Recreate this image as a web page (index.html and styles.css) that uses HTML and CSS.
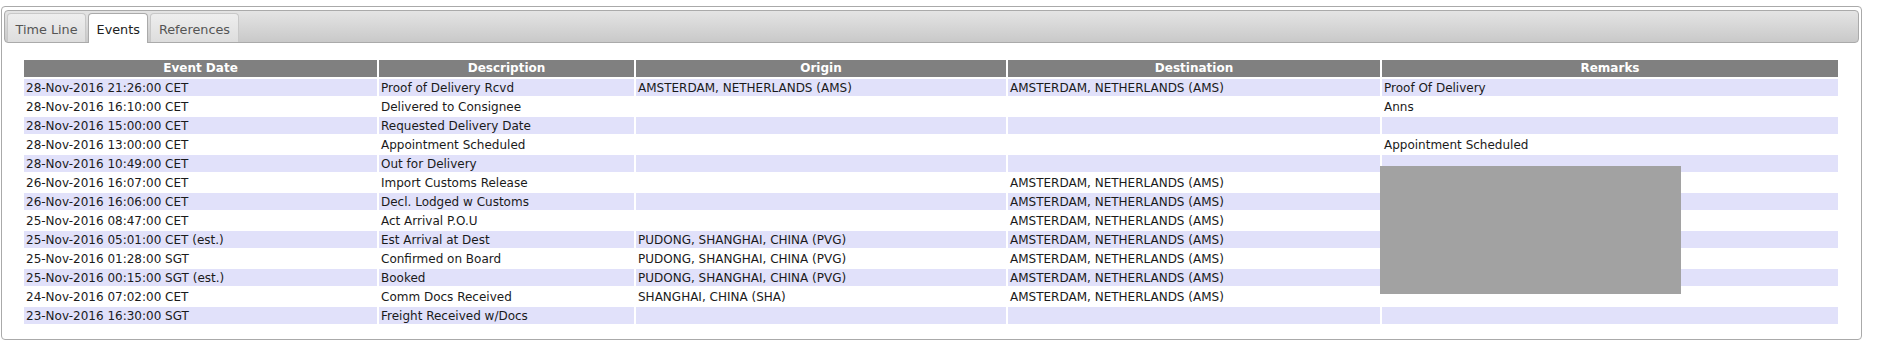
FILE: index.html
```html
<!DOCTYPE html>
<html>
<head>
<meta charset="utf-8">
<link rel="stylesheet" href="styles.css">
</head>
<body>
<div class="tabs">
  <ul class="tab-nav">
    <li class="tab"><a>Time Line</a></li>
    <li class="tab active"><a>Events</a></li>
    <li class="tab"><a>References</a></li>
  </ul>
  <div class="panel">
    <table class="events">
      <colgroup>
        <col class="c-date"><col class="c-desc"><col class="c-origin"><col class="c-dest"><col class="c-rem">
      </colgroup>
      <thead>
        <tr><th>Event Date</th><th>Description</th><th>Origin</th><th>Destination</th><th>Remarks</th></tr>
      </thead>
      <tbody>
        <tr><td>28-Nov-2016 21:26:00 CET</td><td>Proof of Delivery Rcvd</td><td>AMSTERDAM, NETHERLANDS (AMS)</td><td>AMSTERDAM, NETHERLANDS (AMS)</td><td>Proof Of Delivery</td></tr>
        <tr><td>28-Nov-2016 16:10:00 CET</td><td>Delivered to Consignee</td><td></td><td></td><td>Anns</td></tr>
        <tr><td>28-Nov-2016 15:00:00 CET</td><td>Requested Delivery Date</td><td></td><td></td><td></td></tr>
        <tr><td>28-Nov-2016 13:00:00 CET</td><td>Appointment Scheduled</td><td></td><td></td><td>Appointment Scheduled</td></tr>
        <tr><td>28-Nov-2016 10:49:00 CET</td><td>Out for Delivery</td><td></td><td></td><td></td></tr>
        <tr><td>26-Nov-2016 16:07:00 CET</td><td>Import Customs Release</td><td></td><td>AMSTERDAM, NETHERLANDS (AMS)</td><td></td></tr>
        <tr><td>26-Nov-2016 16:06:00 CET</td><td>Decl. Lodged w Customs</td><td></td><td>AMSTERDAM, NETHERLANDS (AMS)</td><td></td></tr>
        <tr><td>25-Nov-2016 08:47:00 CET</td><td>Act Arrival P.O.U</td><td></td><td>AMSTERDAM, NETHERLANDS (AMS)</td><td></td></tr>
        <tr><td>25-Nov-2016 05:01:00 CET (est.)</td><td>Est Arrival at Dest</td><td>PUDONG, SHANGHAI, CHINA (PVG)</td><td>AMSTERDAM, NETHERLANDS (AMS)</td><td></td></tr>
        <tr><td>25-Nov-2016 01:28:00 SGT</td><td>Confirmed on Board</td><td>PUDONG, SHANGHAI, CHINA (PVG)</td><td>AMSTERDAM, NETHERLANDS (AMS)</td><td></td></tr>
        <tr><td>25-Nov-2016 00:15:00 SGT (est.)</td><td>Booked</td><td>PUDONG, SHANGHAI, CHINA (PVG)</td><td>AMSTERDAM, NETHERLANDS (AMS)</td><td></td></tr>
        <tr><td>24-Nov-2016 07:02:00 CET</td><td>Comm Docs Received</td><td>SHANGHAI, CHINA (SHA)</td><td>AMSTERDAM, NETHERLANDS (AMS)</td><td></td></tr>
        <tr><td>23-Nov-2016 16:30:00 SGT</td><td>Freight Received w/Docs</td><td></td><td></td><td></td></tr>
      </tbody>
    </table>
  </div>
  <div class="redact"></div>
</div>
</body>
</html>
```

FILE: styles.css
```css
html, body {
  margin: 0;
  padding: 0;
  background: #fff;
}
body {
  font-family: "DejaVu Sans", Verdana, sans-serif;
  padding: 6px 15px 0 1px;
}
.tabs {
  position: relative;
  border: 1px solid #aaa;
  border-radius: 4px;
  padding: 3px 2px 0 2px;
  background: #fff;
}
.tab-nav {
  list-style: none;
  margin: 0;
  padding: 2px 2px 0 2px;
  display: flex;
  align-items: flex-start;
  gap: 2px;
  border: 1px solid #aaa;
  border-radius: 4px;
  background: linear-gradient(#e4e4e4, #c9c9c9);
}
.tab {
  height: 28px;
  border: 1px solid #c8c8c8;
  border-bottom: 0;
  border-radius: 4px 4px 0 0;
  background: linear-gradient(#eeeeee, #dddddd);
}
.tab a {
  display: block;
  padding: 3px 7.5px 0 7.5px;
  line-height: 25px;
  font-size: 12.8px;
  color: #555;
  white-space: nowrap;
}
.tab.active {
  height: 29px;
  margin-bottom: -1px;
  border-color: #aaa;
  background: #fff;
}
.tab.active a {
  color: #212121;
}
.panel {
  padding: 15px 20px 13px 18px;
}
.events {
  table-layout: fixed;
  width: 1818px;
  border-collapse: separate;
  border-spacing: 2px;
  font-size: 12px;
  color: #1a1a1a;
}
.c-date { width: 353px; }
.c-desc { width: 255px; }
.c-origin { width: 370px; }
.c-dest { width: 372px; }
.c-rem { width: 456px; }
.events th {
  background: #808080;
  color: #fff;
  font-weight: bold;
  text-align: center;
  height: 17px;
  padding: 1px 2px 1px 2px;
  line-height: 15px;
  box-sizing: border-box;
}
.events td {
  height: 17px;
  padding: 2px 2px 0 2px;
  line-height: 15px;
  box-sizing: border-box;
  white-space: nowrap;
  overflow: hidden;
  text-align: left;
}
.events tbody tr:nth-child(odd) td {
  background: #e1e1fa;
}
.redact {
  position: absolute;
  left: 1378px;
  top: 159px;
  width: 301px;
  height: 128px;
  background: #a2a2a2;
}
```
